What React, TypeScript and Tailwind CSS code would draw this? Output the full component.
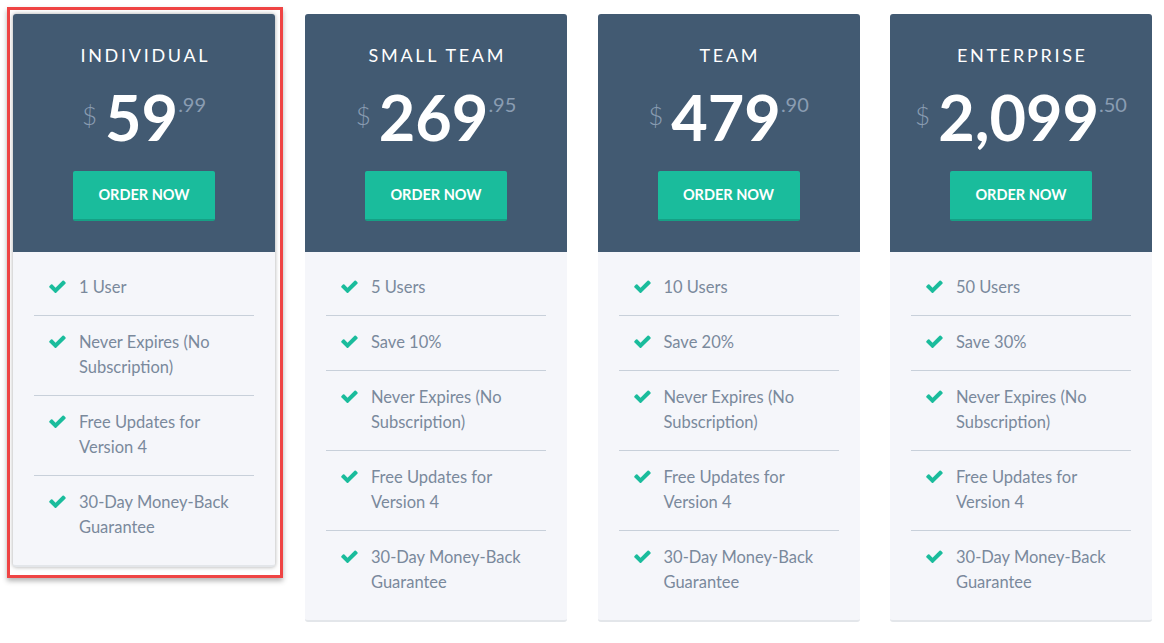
import React from "react";

type Plan = {
  name: string;
  dollars: string;
  cents: string;
  features: string[];
};

const PLANS: Plan[] = [
  {
    name: "INDIVIDUAL",
    dollars: "59",
    cents: ".99",
    features: ["1 User", "Never Expires (No Subscription)", "Free Updates for Version 4", "30-Day Money-Back Guarantee"],
  },
  {
    name: "SMALL TEAM",
    dollars: "269",
    cents: ".95",
    features: ["5 Users", "Save 10%", "Never Expires (No Subscription)", "Free Updates for Version 4", "30-Day Money-Back Guarantee"],
  },
  {
    name: "TEAM",
    dollars: "479",
    cents: ".90",
    features: ["10 Users", "Save 20%", "Never Expires (No Subscription)", "Free Updates for Version 4", "30-Day Money-Back Guarantee"],
  },
  {
    name: "ENTERPRISE",
    dollars: "2,099",
    cents: ".50",
    features: ["50 Users", "Save 30%", "Never Expires (No Subscription)", "Free Updates for Version 4", "30-Day Money-Back Guarantee"],
  },
];

function Check() {
  return (
    <svg viewBox="100 300 1600 1300" className="w-[17px] h-[14px] shrink-0 mt-[5px]" fill="#1abc9c">
      <path d="M1671 566q0 40-28 68l-724 724-136 136q-28 28-68 28t-68-28l-136-136-362-362q-28-28-28-68t28-68l136-136q28-28 68-28t68 28l294 295 656-657q28-28 68-28t68 28l136 136q28 28 28 68z" />
    </svg>
  );
}

function PlanCard({ plan, active }: { plan: Plan; active?: boolean }) {
  return (
    <div
      className={
        "w-[262px] rounded-[3px] overflow-hidden bg-[#f5f6fa] border-b-2 border-[#e3e6ea] " +
        (active ? "shadow-[0_0_4px_rgba(0,0,0,0.35)]" : "")
      }
    >
      <div className="bg-[#425a72] flex flex-col items-center pt-[30px] pb-[31px]">
        <div className="text-[18px] leading-[22px] tracking-[0.15em] text-white pl-[0.15em]">{plan.name}</div>
        <div className="flex items-start mt-[21px] h-[60px]">
          <span className="text-[26px] leading-[26px] text-[#8a9db2] font-light mt-[15px] mr-[8px]">$</span>
          <span className="text-[63px] leading-[60px] font-bold text-white">{plan.dollars}</span>
          <span className="text-[20px] leading-[20px] text-[#8a9db2] mt-[7px]">{plan.cents}</span>
        </div>
        <button className="mt-[24px] w-[142px] h-[50px] bg-[#1abc9c] border-b-2 border-[#16a085] rounded-[2px] text-white font-bold text-[14.5px]">
          ORDER NOW
        </button>
      </div>
      <ul className="px-[21px] pt-[9px] pb-[10px]">
        {plan.features.map((f, i) => (
          <li
            key={f}
            className={
              "flex gap-[13px] pl-[15px] pr-[10px] pt-[13.5px] pb-[15.5px] " +
              (i < plan.features.length - 1 ? "border-b border-[#c8d0da]" : "")
            }
          >
            <Check />
            <span className="text-[16.5px] leading-[25px] text-[#7a899c]">{f}</span>
          </li>
        ))}
      </ul>
    </div>
  );
}

export default function App() {
  return (
    <div
      className="w-[1164px] h-[643px] bg-white flex items-start pl-[7px] pt-[7px]"
      style={{ fontFamily: "Lato, 'Open Sans', sans-serif" }}
    >
      <div className="border-[3px] border-[#ef4444] pt-[4px] pl-[3px] pr-[5px] pb-[8px] bg-white shadow-[0_3px_5px_rgba(0,0,0,0.3)]">
        <PlanCard plan={PLANS[0]} active />
      </div>
      <div className="flex gap-[30.5px] ml-[22px] mt-[7px]">
        {PLANS.slice(1).map((p) => (
          <PlanCard key={p.name} plan={p} />
        ))}
      </div>
    </div>
  );
}
